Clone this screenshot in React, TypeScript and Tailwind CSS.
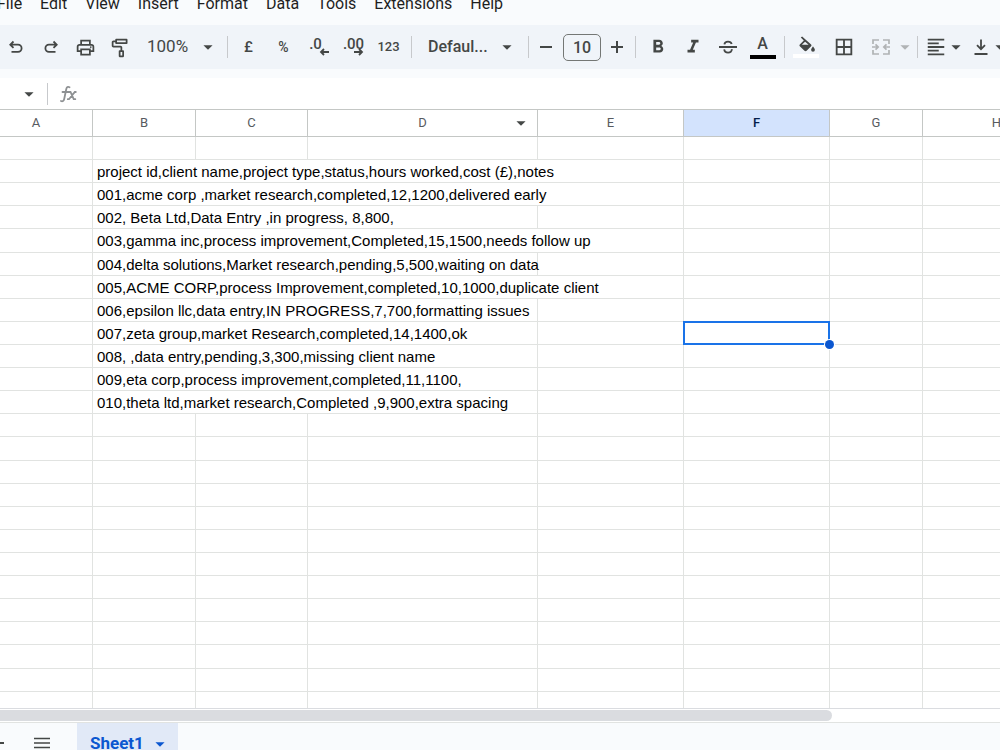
import type { ReactNode } from 'react'
import {
  MdArrowDropDown,
  MdBorderAll,
  MdFormatAlignLeft,
  MdFormatBold,
  MdFormatItalic,
  MdOutlineImagesearchRoller,
  MdOutlinePrint,
} from 'react-icons/md'

const menus = ['File', 'Edit', 'View', 'Insert', 'Format', 'Data', 'Tools', 'Extensions', 'Help']

const columns = [
  { name: 'A', width: 'w-[113px]' },
  { name: 'B', width: 'w-[103px]' },
  { name: 'C', width: 'w-[112px]' },
  { name: 'D', width: 'w-[230px]' },
  { name: 'E', width: 'w-[146px]' },
  { name: 'F', width: 'w-[146px]' },
  { name: 'G', width: 'w-[93px]' },
  { name: 'H', width: 'w-[148px]' },
]

// Text in column B and the number of columns it spills across.
const entries: Record<number, { text: string; span: number }> = {
  2: { text: 'project id,client name,project type,status,hours worked,cost (£),notes', span: 4 },
  3: { text: '001,acme corp ,market research,completed,12,1200,delivered early', span: 4 },
  4: { text: '002, Beta Ltd,Data Entry ,in progress, 8,800,', span: 3 },
  5: { text: '003,gamma inc,process improvement,Completed,15,1500,needs follow up', span: 4 },
  6: { text: '004,delta solutions,Market research,pending,5,500,waiting on data', span: 3 },
  7: { text: '005,ACME CORP,process Improvement,completed,10,1000,duplicate client', span: 4 },
  8: { text: '006,epsilon llc,data entry,IN PROGRESS,7,700,formatting issues', span: 3 },
  9: { text: '007,zeta group,market Research,completed,14,1400,ok', span: 3 },
  10: { text: '008, ,data entry,pending,3,300,missing client name', span: 3 },
  11: { text: '009,eta corp,process improvement,completed,11,1100,', span: 3 },
  12: { text: '010,theta ltd,market research,Completed ,9,900,extra spacing', span: 3 },
}

const rows = Array.from({ length: 25 }, (_, i) => i + 1)
const selected = { row: 9, column: 'F' }

function Tool({ label, children }: { label: string; children: ReactNode }) {
  return (
    <button type="button" aria-label={label} className="flex h-8 w-[35px] shrink-0 items-center justify-center">
      {children}
    </button>
  )
}

function Separator() {
  return <span className="h-[22px] w-px shrink-0 bg-[#c7c9cc]" />
}

function Caret({ className = '' }: { className?: string }) {
  return <MdArrowDropDown size={22} className={'shrink-0 ' + className} />
}

function Stroke({ d, size = 20, width = 2 }: { d: string; size?: number; width?: number }) {
  return (
    <svg width={size} height={size} viewBox="0 0 20 20" fill="none" stroke="currentColor" strokeWidth={width}>
      <path d={d} />
    </svg>
  )
}

function Toolbar() {
  return (
    <div role="toolbar" className="flex h-11 shrink-0 items-center overflow-hidden bg-[#f0f4f9] text-base font-medium text-[#444746]">
      <div className="-ml-[2px] flex shrink-0">
        <Tool label="Undo"><Stroke d="M7.5 4.5 4.3 7.7 7.5 10.9M4.6 7.7H12a3.6 3.6 0 0 1 0 7.2H5.5" width={1.8} /></Tool>
        <Tool label="Redo"><Stroke d="M12.5 4.5 15.7 7.7 12.5 10.9M15.4 7.7H8a3.6 3.6 0 0 0 0 7.2h6.5" width={1.8} /></Tool>
        <Tool label="Print"><MdOutlinePrint size={21} /></Tool>
        <Tool label="Paint format"><MdOutlineImagesearchRoller size={21} /></Tool>
      </div>
      <button type="button" className="flex h-8 w-[89px] shrink-0 items-center justify-between pr-[8px] pl-[9px] text-[17px] font-normal">
        100%<Caret />
      </button>
      <Separator />
      <div className="mr-[5px] ml-[3px] flex shrink-0 text-[15px]">
        <Tool label="Format as currency">£</Tool>
        <Tool label="Format as percent"><span className="text-sm">%</span></Tool>
        <Tool label="Decrease decimal places">
          <span className="relative -mt-[6px] -ml-[6px]">
            .0
            <svg className="absolute top-[15px] left-[10px]" width="11" height="8" viewBox="0 0 11 8" fill="none" stroke="currentColor" strokeWidth="1.8"><path d="M10 4H2M5 1 2 4l3 3" /></svg>
          </span>
        </Tool>
        <Tool label="Increase decimal places">
          <span className="relative -mt-[6px]">
            .00
            <svg className="absolute top-[15px] left-[10px]" width="11" height="8" viewBox="0 0 11 8" fill="none" stroke="currentColor" strokeWidth="1.8"><path d="M1 4h8M6 1l3 3-3 3" /></svg>
          </span>
        </Tool>
        <Tool label="More formats"><span className="text-[13px]">123</span></Tool>
      </div>
      <Separator />
      <button type="button" className="flex h-8 w-[116px] shrink-0 items-center justify-between pr-[10px] pl-[16px]">
        Defaul...<Caret />
      </button>
      <Separator />
      <button type="button" aria-label="Decrease font size" className="flex h-8 w-[34px] shrink-0 items-center justify-center"><Stroke d="M4 10h12" size={20} /></button>
      <input aria-label="Font size" defaultValue="10" className="h-[27px] w-[38px] shrink-0 rounded-[5px] border border-[#747775] bg-transparent text-center" />
      <button type="button" aria-label="Increase font size" className="flex h-8 w-[34px] shrink-0 items-center pl-[6px]"><Stroke d="M4 10h12M10 4v12" size={20} /></button>
      <Separator />
      <div className="mx-[4px] flex shrink-0">
        <Tool label="Bold"><MdFormatBold size={22} /></Tool>
        <Tool label="Italic"><MdFormatItalic size={22} /></Tool>
        <Tool label="Strikethrough">
          <Stroke d="M1 10h18M6.4 7.4C6.6 5.6 8 4.7 10 4.7s3.300.9 3.700 2.300M6.200 12.400C6.400 14.600 8 15.600 10.100 15.600S14 14.400 13.800 12.200" width={1.8} />
        </Tool>
        <Tool label="Text color">
          <span className="flex flex-col items-center">
            <span className="leading-4">A</span>
            <span className="mt-[3px] h-[4px] w-[26px] bg-black" />
          </span>
        </Tool>
      </div>
      <Separator />
      <div className="mx-[3px] flex shrink-0 gap-[3px]">
        <Tool label="Fill color">
          <span className="flex flex-col items-center">
            <svg width="20" height="18" viewBox="0 0 20 18" fill="currentColor">
              <path fillRule="evenodd" d="M4.800 1.600 6.100.400l9 8.100c.5.500.5 1.200 0 1.700l-4.500 4.500c-.6.600-1.500.600-2.100 0L3.800 10.200c-.5-.5-.5-1.200 0-1.700l4-4Zm4.300 4.200L5.800 8.800h6.800Z" />
              <path d="M17 10.500s-1.900 2-1.900 3.300a1.900 1.900 0 0 0 3.800 0c0-1.300-1.900-3.300-1.900-3.300Z" />
            </svg>
            <span className="h-[4px] w-[26px] bg-white" />
          </span>
        </Tool>
        <Tool label="Borders"><MdBorderAll size={22} /></Tool>
      </div>
      <button type="button" aria-label="Merge cells" disabled className="flex h-8 w-[53px] shrink-0 items-center justify-between pr-[1px] pl-[7px] text-[#b0b3b5]">
        <Stroke d="M8 3H2v4M2 13v4h6M12 3h6v4M18 13v4h-6M1 10h6M4.500 7.300 7.200 10l-2.700 2.700M19 10h-6M15.500 7.300 12.800 10l2.700 2.700" width={1.700} />
        <Caret />
      </button>
      <Separator />
      <button type="button" aria-label="Horizontal align" className="flex h-8 w-[50px] shrink-0 items-center pl-[7px]">
        <MdFormatAlignLeft size={22} /><Caret className="-ml-[2px]" />
      </button>
      <button type="button" aria-label="Vertical align" className="flex h-8 w-[46px] shrink-0 items-center pl-[3px]">
        <Stroke d="M10 2.500v9.500M6 8.200 10 12.200l4-4M3.500 17h13" width={1.800} /><Caret className="-ml-[2px]" />
      </button>
    </div>
  )
}

function Grid() {
  return (
    <main className="min-h-0 flex-1 overflow-hidden border-b border-[#dadce0] bg-white">
      <table className="-ml-5 h-[605px] w-full table-fixed border-separate border-spacing-0">
        <thead>
          <tr className="h-[27px]">
            {columns.map(({ name, width }) => (
              <th
                key={name}
                scope="col"
                className={
                  'relative h-[27px] border-r border-b border-[#c4c7c5] p-0 text-[13px] leading-[26px] ' +
                  width +
                  (name === selected.column ? ' bg-[#d3e3fd] font-medium text-[#041e49]' : ' font-normal text-[#575b5f]')
                }
              >
                {name}
                {name === 'D' && (
                  <button type="button" aria-label="Column options" className="absolute top-0 right-[5px] flex h-[26px] items-center text-[#444746]">
                    <Caret />
                  </button>
                )}
              </th>
            ))}
          </tr>
        </thead>
        <tbody>
          {rows.map((row) => {
            const entry = entries[row]
            const cells = entry ? columns.filter((_, i) => i < 2 || i > entry.span) : columns
            return (
              <tr key={row}>
                {cells.map(({ name }) => {
                  const text = name === 'B' ? entry?.text : undefined
                  const active = row === selected.row && name === selected.column
                  return (
                    <td
                      key={name}
                      colSpan={text ? entry.span : 1}
                      className={'relative border-r border-b border-[#e1e3e1] p-0' + (active ? ' z-10' : '')}
                    >
                      <div className="h-[22px] pl-[4px] font-['Liberation_Sans',sans-serif] text-[15px] leading-[24px] whitespace-pre text-black">
                        {text}
                      </div>
                      {active && (
                        <div className="absolute -inset-[1px] border-2 border-[#1a73e8]">
                          <span className="absolute -right-[6px] -bottom-[6px] size-[9px] rounded-full bg-[#0b57d0] ring-1 ring-white" />
                        </div>
                      )}
                    </td>
                  )
                })}
              </tr>
            )
          })}
        </tbody>
      </table>
    </main>
  )
}

export default function App() {
  return (
    <div className="flex h-screen flex-col overflow-hidden bg-[#f9fbfd] font-[Roboto,sans-serif]">
      <nav className="flex h-[25px] shrink-0 items-start gap-[18px] overflow-hidden text-base text-[#1f1f1f]">
        {menus.map((menu) => (
          <button key={menu} type="button" className="-mt-3 h-8 shrink-0 first:-ml-[3px]">{menu}</button>
        ))}
      </nav>
      <Toolbar />
      <div className="mt-[9px] flex h-8 shrink-0 items-center border-b border-[#c4c7c5] bg-white text-[#444746]">
        <button type="button" aria-label="Name box" className="flex h-full w-[47px] items-center justify-end pr-[7px]"><Caret /></button>
        <Separator />
        <label htmlFor="formula" aria-label="Formula" className="w-9 pl-3">
          <svg width="17" height="18" viewBox="0 0 17 18" fill="none" stroke="#8e9193" strokeWidth="1.8" strokeLinecap="round">
            <path d="M9.500 2.200C7.800 1.200 6.700 2.200 6.300 4L4.200 14c-.4 1.900-1.700 2.800-3.200 2M2.500 7h6" />
            <path d="M8.800 7h1.700l3.200 7.200h1.600M15.800 7h-1L9 14.200H7.800" />
          </svg>
        </label>
        <input id="formula" className="h-full min-w-0 flex-1 bg-transparent outline-none" />
      </div>
      <Grid />
      <div className="flex h-[14px] shrink-0 items-center border-b border-[#e1e3e1] bg-white">
        <div className="h-[11px] w-[83.2%] rounded-r-full bg-[#dadce0]" />
      </div>
      <footer className="flex h-[27px] shrink-0 items-start overflow-hidden text-[#444746]">
        <button type="button" aria-label="Add sheet" className="-ml-4 flex h-10 w-10 items-center justify-start"><Stroke d="M4 10h16M10 4v12" /></button>
        <button type="button" aria-label="All sheets" className="flex h-10 w-9 items-center justify-center"><Stroke d="M2 5.500h16M2 10h16M2 14.500h16" width={1.700} /></button>
        <button type="button" className="ml-[17px] flex h-[42px] w-[101px] items-center justify-between bg-[#e1e9f7] pr-[7px] pl-[13px] text-[17px] font-bold text-[#0b57d0]">
          Sheet1<Caret />
        </button>
      </footer>
    </div>
  )
}
